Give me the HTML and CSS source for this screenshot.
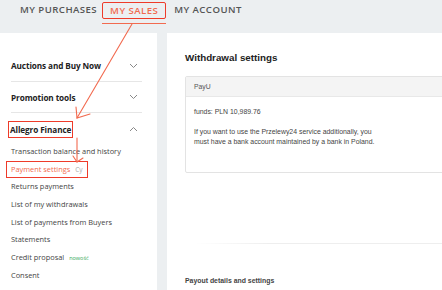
FILE: index.html
```html
<!DOCTYPE html>
<html>
<head>
<meta charset="utf-8">
<link rel="stylesheet" href="styles.css">
</head>
<body>
<div class="page">
  <nav class="tabs">
    <span class="tab">MY PURCHASES</span>
    <span class="tab active"><span class="tab-box">MY SALES</span></span>
    <span class="tab">MY ACCOUNT</span>
  </nav>
  <div class="main">
    <aside class="sidebar">
      <div class="section">
        <span class="sec-title">Auctions and Buy Now</span>
        <svg class="chev" width="9" height="6" viewBox="0 0 9 6"><path d="M1 1l3.5 3.5L8 1" fill="none" stroke="#888" stroke-width="1"/></svg>
      </div>
      <div class="section">
        <span class="sec-title">Promotion tools</span>
        <svg class="chev" width="9" height="6" viewBox="0 0 9 6"><path d="M1 1l3.5 3.5L8 1" fill="none" stroke="#888" stroke-width="1"/></svg>
      </div>
      <div class="section open">
        <span class="sec-title boxed">Allegro Finance</span>
        <svg class="chev" width="9" height="6" viewBox="0 0 9 6"><path d="M1 5l3.5-3.5L8 5" fill="none" stroke="#888" stroke-width="1"/></svg>
      </div>
      <ul class="sub">
        <li>Transaction balance and history</li>
        <li class="current"><span class="cur-box">Payment settings <span class="tag">Cy</span></span></li>
        <li>Returns payments</li>
        <li>List of my withdrawals</li>
        <li>List of payments from Buyers</li>
        <li>Statements</li>
        <li>Credit proposal <span class="new">nowość</span></li>
        <li>Consent</li>
      </ul>
    </aside>
    <section class="content">
      <h2 class="title">Withdrawal settings</h2>
      <div class="box">
        <div class="box-head">PayU</div>
        <div class="box-body">
          <p class="funds">funds: PLN 10,989.76</p>
          <p class="note">If you want to use the Przelewy24 service additionally, you<br>must have a bank account maintained by a bank in Poland.</p>
        </div>
      </div>
      <div class="divider"></div>
      <h3 class="sub-title">Payout details and settings</h3>
    </section>
  </div>
  <svg class="annot" width="442" height="290" viewBox="0 0 442 290">
    <g fill="none" stroke="#f26a4f" stroke-width="1.1" stroke-linecap="round">
      <path d="M132 24L77 118"/>
      <path d="M76 107L77 118L90 114"/>
      <path d="M77 138L77 162"/>
      <path d="M73 156L77 162L83 158"/>
    </g>
  </svg>
</div>
</body>
</html>
```

FILE: styles.css
```css
* { box-sizing: border-box; }
html, body { margin: 0; padding: 0; }
body {
  background: #eceff1;
  font-family: "Open Sans", "Liberation Sans", Arial, sans-serif;
  color: #333;
  overflow: hidden;
}
.page {
  position: relative;
  width: 442px;
  height: 290px;
  overflow: hidden;
}
.tabs {
  display: flex;
  height: 25px;
  padding-left: 20px;
  gap: 8px;
  align-items: flex-start;
}
.tab {
  font-size: 9.6px;
  font-weight: 600;
  letter-spacing: 0.45px;
  color: #555;
  line-height: 14px;
  padding-top: 3px;
}
.tab.active {
  color: #f26a4f;
  padding-top: 2px;
  border-bottom: 1.5px solid #f26a4f;
  height: 24px;
  margin-left: -3px;
}
.tab-box {
  display: block;
  border: 1.5px solid #ee3b2a;
  border-radius: 2px;
  padding: 1px 7px 1px 7px;
  line-height: 13px;
}
.main {
  display: flex;
  gap: 10px;
  margin-top: 8px;
  height: 257px;
}
.sidebar {
  width: 157px;
  flex: none;
  background: #fff;
  padding: 17px 15px 0 11px;
}
.section {
  display: flex;
  align-items: center;
  justify-content: space-between;
  height: 32px;
  border-bottom: 1px solid #e6e6e6;
  padding-right: 4px;
}
.section + .section { height: 31px; }
.section.open {
  border-bottom: none;
  height: 30px;
  padding-top: 2px;
}
.sec-title {
  font-size: 8.2px;
  font-weight: 700;
  color: #222;
  letter-spacing: -0.1px;
}
.sec-title.boxed {
  border: 1.5px solid #ee3b2a;
  margin-left: -3px;
  padding: 2px 1px;
}
.sub {
  list-style: none;
  margin: 0;
  padding: 0;
}
.sub li {
  font-size: 7.4px;
  color: #444;
  line-height: 17.7px;
  height: 17.7px;
  white-space: nowrap;
}
.sub li.current { color: #f26a4f; }
.cur-box {
  display: inline-block;
  border: 1.5px solid #ee3b2a;
  margin-left: -5px;
  padding: 0 4px 0 4px;
  line-height: 14px;
}
.tag { color: #aaa; font-size: 6.5px; margin-left: 3px; }
.new { color: #3aaa5a; font-size: 5.5px; margin-left: 3px; }
.content {
  flex: 1;
  background: #fff;
  padding: 16px 0 0 18px;
  min-width: 0;
  overflow: hidden;
}
.title {
  margin: 0;
  font-family: "Liberation Sans", Arial, sans-serif;
  font-size: 9.8px;
  font-weight: 700;
  color: #222;
  line-height: 18px;
}
.box {
  margin-top: 9px;
  width: 300px;
  height: 97px;
  border: 1px solid #e3e3e3;
  border-radius: 2px;
  font-family: "Liberation Sans", Arial, sans-serif;
}
.box-head {
  height: 20px;
  background: #f4f4f4;
  border-bottom: 1px solid #e8e8e8;
  padding-left: 8px;
  font-size: 6.8px;
  line-height: 20px;
  color: #555;
}
.box-body { padding: 9px 8px 0; }
.funds {
  margin: 0;
  font-size: 6.9px;
  line-height: 12px;
  color: #444;
}
.note {
  margin: 9px 0 0;
  font-size: 6.9px;
  line-height: 10px;
  color: #444;
}
.divider {
  margin: 70px 0 0 10px;
  height: 1px;
  background: linear-gradient(to right, #fff, #eeeeee 30%);
}
.sub-title {
  margin: 28px 0 0;
  font-family: "Liberation Sans", Arial, sans-serif;
  font-size: 6.9px;
  font-weight: 700;
  color: #444;
  line-height: 18px;
}
.annot {
  position: absolute;
  left: 0;
  top: 0;
  pointer-events: none;
}
```
